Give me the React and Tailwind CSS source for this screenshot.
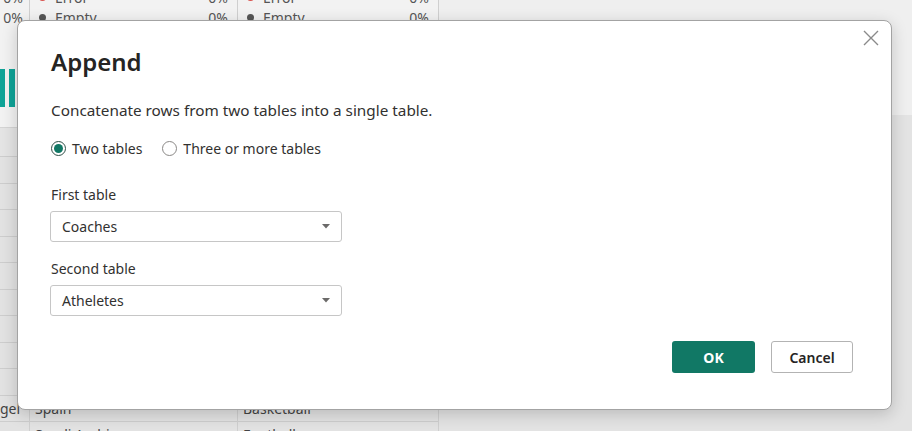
import React from 'react';

const font = "font-['Noto_Sans','Open_Sans',sans-serif]";

const rows = [
  { a: '', b: '', c: '' },
  { a: '', b: '', c: '' },
  { a: '', b: '', c: '' },
  { a: '', b: '', c: '' },
  { a: '', b: '', c: '' },
  { a: '', b: '', c: '' },
  { a: '', b: '', c: '' },
  { a: '', b: '', c: '' },
  { a: '', b: '', c: '' },
  { a: 'gel', b: 'Spain', c: 'Basketball' },
  { a: '', b: 'Saudi Arabia', c: 'Football' },
];

const ProfileLine = ({ dot, label }) => (
  <div className="flex items-center h-[20px] pl-[9px] pr-[9px] text-[14px] text-[#555]">
    <span className={`w-[7px] h-[7px] rounded-full mr-[9px] ${dot}`} />
    <span className="flex-1">{label}</span>
    <span>0%</span>
  </div>
);

const DataColumn = ({ width, field }) => (
  <div className={`flex flex-col ${width} border-r border-[#cfcfcf]`}>
    <div className="h-[141px] shrink-0 bg-[#f2f2f2] border-b border-[#d4d4d4] -mt-[13px] flex flex-col">
      <ProfileLine dot="bg-[#d9534f]" label="Error" />
      <ProfileLine dot="bg-[#555]" label="Empty" />
    </div>
    <div className="h-[29px] shrink-0 border-b border-[#cdcdcd] bg-[#e4e4e4]" />
    {rows.map((r, i) => (
      <div key={i} className="h-[26.5px] shrink-0 border-b border-[#cdcdcd] bg-[#e2e2e2] flex items-center px-[5px] text-[14px] text-[#444] overflow-hidden whitespace-nowrap">
        {r[field]}
      </div>
    ))}
  </div>
);

const Caret = () => (
  <svg width="8" height="5" viewBox="0 0 8 5" className="shrink-0">
    <path d="M0 0 L8 0 L4 4.5 Z" fill="#6b6a69" />
  </svg>
);

const Select = ({ value }) => (
  <div className="w-[292px] h-[31px] border border-[#c6c6c6] rounded-[3px] flex items-center justify-between pl-[11px] pr-[11px] text-[14px] text-[#323130] bg-white">
    <span>{value}</span>
    <Caret />
  </div>
);

export default function App() {
  return (
    <div className={`relative w-[912px] h-[431px] overflow-hidden bg-[#e7e7e7] ${font}`}>
      {/* dimmed query editor behind the dialog */}
      <div className="flex h-full">
        <div className="flex flex-col w-[30px] border-r border-[#cfcfcf]">
          <div className="h-[141px] shrink-0 bg-[#f2f2f2] border-b border-[#d4d4d4] -mt-[13px] flex flex-col">
            <div className="h-[20px] flex items-center justify-end pr-[6px] text-[14px] text-[#555]">0%</div>
            <div className="h-[20px] flex items-center justify-end pr-[6px] text-[14px] text-[#555]">0%</div>
            <div className="flex gap-[4px] mt-[42px]">
              <div className="w-[5px] h-[38px] bg-[#0fa397]" />
              <div className="w-[6px] h-[38px] bg-[#0fa397]" />
            </div>
          </div>
          <div className="h-[29px] shrink-0 border-b border-[#cdcdcd] bg-[#e4e4e4]" />
          {rows.map((r, i) => (
            <div key={i} className="h-[26.5px] shrink-0 border-b border-[#cdcdcd] bg-[#e2e2e2] flex items-center text-[14px] text-[#444] whitespace-nowrap">
              {r.a}
            </div>
          ))}
        </div>
        <DataColumn width="w-[208px]" field="b" />
        <DataColumn width="w-[201px]" field="c" />
        <div className="flex-1 flex flex-col">
          <div className="h-[115px] bg-[#efefef]" />
          <div className="flex-1 bg-[#e3e3e3]" />
        </div>
      </div>

      {/* Append dialog */}
      <div className="absolute left-[17px] top-[20px] w-[875px] h-[390px] bg-white rounded-[8px] border border-[#a3a3a3] shadow-[0_4px_16px_rgba(0,0,0,0.18)] flex flex-col pl-[33px] pr-[38px] pt-[25px]">
        <button className="absolute right-[12px] top-[9px] w-[16px] h-[16px] flex items-center justify-center">
          <svg width="16" height="16" viewBox="0 0 16 16">
            <path d="M1 1 L15 15 M15 1 L1 15" stroke="#8a8a8a" strokeWidth="1.4" fill="none" />
          </svg>
        </button>

        <h1 className="text-[24px] leading-[32px] font-semibold text-[#252423]">Append</h1>

        <p className="mt-[22px] text-[15.3px] leading-[20px] text-[#323130]">
          Concatenate rows from two tables into a single table.
        </p>

        <div className="mt-[18px] flex items-center h-[20px] text-[14px] text-[#323130]">
          <span className="w-[15px] h-[15px] rounded-full border border-[#2f4f47] flex items-center justify-center mr-[6px]">
            <span className="w-[9px] h-[9px] rounded-full bg-[#117865]" />
          </span>
          <span>Two tables</span>
          <span className="ml-[20px] w-[15px] h-[15px] rounded-full border border-[#8a8886] mr-[6px]" />
          <span>Three or more tables</span>
        </div>

        <label className="mt-[27px] text-[14px] leading-[20px] text-[#323130]">First table</label>
        <div className="mt-[6px] -ml-[1px]">
          <Select value="Coaches" />
        </div>

        <label className="mt-[17px] text-[14px] leading-[20px] text-[#323130]">Second table</label>
        <div className="mt-[6px] -ml-[1px]">
          <Select value="Atheletes" />
        </div>

        <div className="mt-[25px] flex justify-end gap-[16px]">
          <button className="w-[83px] h-[32px] rounded-[3px] bg-[#117865] text-white text-[14px] font-bold">OK</button>
          <button className="w-[82px] h-[32px] rounded-[3px] bg-white border border-[#b3b3b3] text-[#252423] text-[14px] font-semibold">Cancel</button>
        </div>
      </div>
    </div>
  );
}
